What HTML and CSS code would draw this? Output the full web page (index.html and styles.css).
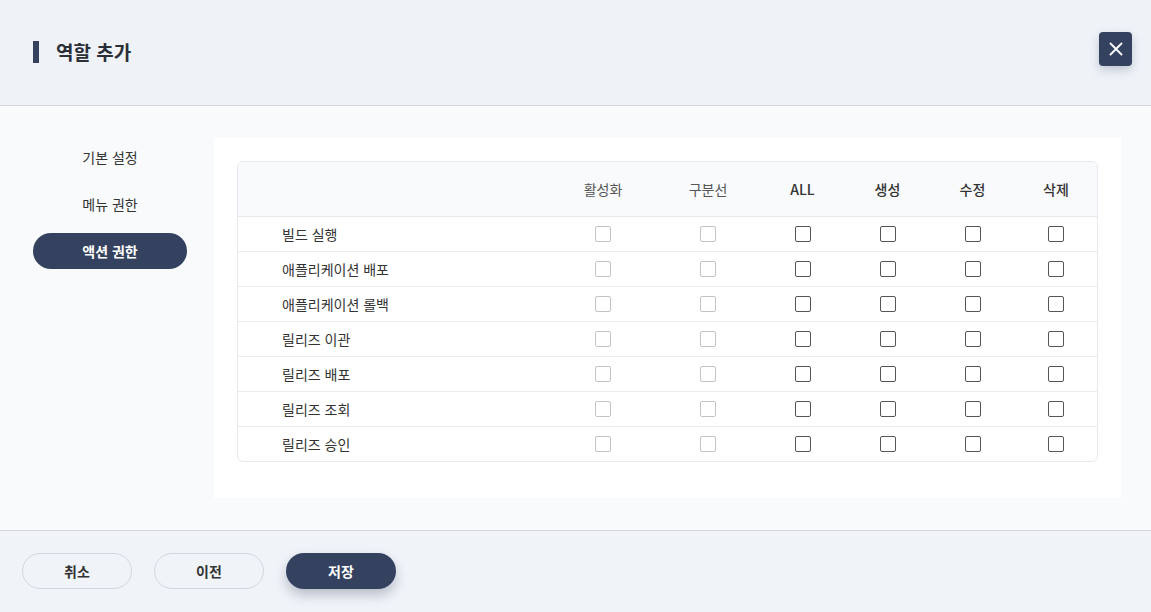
FILE: index.html
```html
<!DOCTYPE html>
<html lang="ko">
<head>
    <meta charset="UTF-8">
    <meta name="viewport" content="width=device-width, initial-scale=1.0">
    <title>역할 추가</title>
    <link rel="stylesheet" href="styles.css">
</head>
<body>
    <div class="modal">
        <!-- Header -->
        <div class="modal-header">
            <h1 class="modal-title">역할 추가</h1>
            <button class="close-btn" aria-label="닫기">
                <svg width="14" height="14" viewBox="0 0 14 14">
                    <path d="M1.5 1.5 L12.5 12.5 M12.5 1.5 L1.5 12.5" stroke="#fff" stroke-width="1.8" stroke-linecap="round"/>
                </svg>
            </button>
        </div>

        <!-- Body -->
        <div class="modal-body">
            <div class="side-menu">
                <div class="side-item">기본 설정</div>
                <div class="side-item">메뉴 권한</div>
                <div class="side-item active">액션 권한</div>
            </div>
            <div class="panel">
                <div class="table-wrap">
                    <table class="perm-table">
                        <colgroup>
                            <col class="col-name">
                            <col class="col-wide">
                            <col class="col-wide2">
                            <col class="col-std">
                            <col class="col-std">
                            <col class="col-std">
                            <col class="col-last">
                        </colgroup>
                        <thead>
                            <tr>
                                <th></th>
                                <th class="muted">활성화</th>
                                <th class="muted">구분선</th>
                                <th>ALL</th>
                                <th>생성</th>
                                <th>수정</th>
                                <th>삭제</th>
                            </tr>
                        </thead>
                        <tbody id="permRows"></tbody>
                    </table>
                </div>
            </div>
        </div>

        <!-- Footer -->
        <div class="modal-footer">
            <button class="btn btn-outline">취소</button>
            <button class="btn btn-outline">이전</button>
            <button class="btn btn-primary">저장</button>
        </div>
    </div>

    <script>
        // action permission rows
        const actions = ['빌드 실행', '애플리케이션 배포', '애플리케이션 롤백', '릴리즈 이관', '릴리즈 배포', '릴리즈 조회', '릴리즈 승인'];
        const tbody = document.getElementById('permRows');

        actions.forEach(function(name) {
            const tr = document.createElement('tr');
            let html = `<td class="name">${name}</td>`;
            html += '<td><input type="checkbox" class="chk" disabled></td>';
            html += '<td><input type="checkbox" class="chk" disabled></td>';
            for (let i = 0; i < 4; i++) {
                html += '<td><input type="checkbox" class="chk"></td>';
            }
            tr.innerHTML = html;
            tbody.appendChild(tr);
        });
    </script>
</body>
</html>
```

FILE: styles.css
```css
* {
    box-sizing: border-box;
}
body {
    margin: 0;
    font-family: "Noto Sans CJK KR", "Noto Sans", sans-serif;
    color: #333;
    background-color: #f0f3f8;
}
.modal {
    width: 1151px;
    height: 612px;
    display: flex;
    flex-direction: column;
}
.modal-header {
    height: 106px;
    flex-shrink: 0;
    background-color: #eff3f8;
    border-bottom: 1px solid #d3d7dd;
    display: flex;
    justify-content: space-between;
    align-items: flex-start;
    padding: 0 19px 0 33px;
}
.modal-title {
    margin: 0;
    margin-top: 38px;
    font-size: 19px;
    font-weight: bold;
    color: #2b2f38;
    line-height: 28px;
    display: flex;
    align-items: center;
}
.modal-title::before {
    content: "";
    display: inline-block;
    width: 6px;
    height: 22px;
    background-color: #344260;
    margin-right: 17px;
}
.close-btn {
    margin-top: 32px;
    width: 33px;
    height: 34px;
    border: none;
    border-radius: 4px;
    background-color: #344260;
    box-shadow: 0px 4px 10px rgba(52, 66, 96, 0.25);
    display: flex;
    justify-content: center;
    align-items: center;
    padding: 0;
    cursor: pointer;
}
.modal-body {
    flex: 1;
    background-color: #f8fafc;
    display: flex;
    padding: 32px 30px 32px 33px;
    gap: 27px;
}
.side-menu {
    width: 154px;
    flex-shrink: 0;
    display: flex;
    flex-direction: column;
    gap: 11px;
    padding-top: 1px;
}
.side-item {
    height: 36px;
    border-radius: 18px;
    display: flex;
    justify-content: center;
    align-items: center;
    font-size: 14px;
    color: #333;
}
.side-item.active {
    background-color: #344260;
    color: #fff;
    font-weight: bold;
}
.panel {
    flex: 1;
    background-color: #fff;
    padding: 23px 23px 36px 23px;
}
.table-wrap {
    border: 1px solid #e6e9ee;
    border-radius: 6px;
    overflow: hidden;
}
.perm-table {
    width: 100%;
    border-collapse: collapse;
    table-layout: fixed;
}
.col-name { width: 312px; }
.col-wide { width: 106px; }
.col-wide2 { width: 104px; }
.col-std { width: 85px; }
.col-last { width: 82px; }
.perm-table th {
    height: 54px;
    background-color: #f8fafc;
    font-size: 14px;
    font-weight: 500;
    color: #333;
    text-align: center;
    border-bottom: 1px solid #e6e9ee;
    padding: 0;
}
.perm-table th.muted {
    color: #555;
    font-weight: normal;
}
.perm-table td {
    height: 35px;
    text-align: center;
    border-bottom: 1px solid #e9ecf0;
    padding: 0;
    font-size: 14px;
}
.perm-table tbody tr:last-child td {
    border-bottom: none;
}
.perm-table td.name {
    text-align: left;
    padding-left: 44px;
    color: #333;
}
.chk {
    appearance: none;
    -webkit-appearance: none;
    width: 16px;
    height: 16px;
    margin: 5px 0 0 0;
    border: 1.5px solid #555;
    border-radius: 2px;
    background-color: #fff;
}
.chk:disabled {
    border-color: #c4c4c4;
}
.modal-footer {
    height: 83px;
    flex-shrink: 0;
    background-color: #f0f3f8;
    border-top: 1px solid #d3d7dd;
    display: flex;
    gap: 22px;
    padding: 22px 0 0 22px;
}
.btn {
    width: 110px;
    height: 36px;
    border-radius: 18px;
    font-family: "Noto Sans CJK KR", "Noto Sans", sans-serif;
    font-size: 14px;
    font-weight: bold;
    cursor: pointer;
}
.btn-outline {
    background-color: transparent;
    border: 1px solid #d3d7dd;
    color: #333;
}
.btn-primary {
    background-color: #344260;
    border: none;
    color: #fff;
    box-shadow: 0px 6px 12px rgba(52, 66, 96, 0.3);
}
```
